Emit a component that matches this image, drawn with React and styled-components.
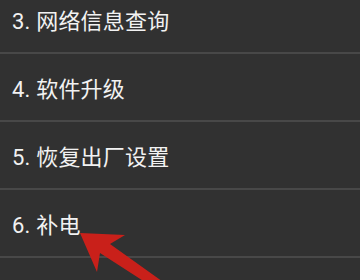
import React from 'react';
import styled, { createGlobalStyle } from 'styled-components';

const GlobalStyle = createGlobalStyle`
  html, body {
    margin: 0;
    padding: 0;
    background: #313131;
  }
  body {
    width: 360px;
    height: 280px;
    overflow: hidden;
  }
`;

const items = ['3. 网络信息查询', '4. 软件升级', '5. 恢复出厂设置', '6. 补电'];

const Screen = styled.div`
  position: relative;
  width: 360px;
  height: 280px;
  overflow: hidden;
  background: #313131;
`;

const Menu = styled.ul`
  list-style: none;
  margin: -14px 0 0;
  padding: 0;
`;

const Item = styled.li`
  display: flex;
  align-items: center;
  height: 66px;
  padding-left: 12px;
  border-bottom: 2px solid #484848;
  color: #f2f2f2;
  font-family: Roboto, "Noto Sans CJK SC", sans-serif;
  font-size: 22px;
  letter-spacing: 0.2px;
`;

const Arrow = styled.svg`
  position: absolute;
  left: 70px;
  top: 222px;
`;

export default function App() {
  return (
    <Screen>
      <GlobalStyle />
      <Menu>
        {items.map((text) => (
          <Item key={text}>{text}</Item>
        ))}
      </Menu>
      <Arrow width="110" height="70" viewBox="0 0 110 70">
        <polygon
          points="10,11 55,13 40,22 96,62 78,62 30,31 27,50"
          fill="#c9201a"
        />
      </Arrow>
    </Screen>
  );
}
